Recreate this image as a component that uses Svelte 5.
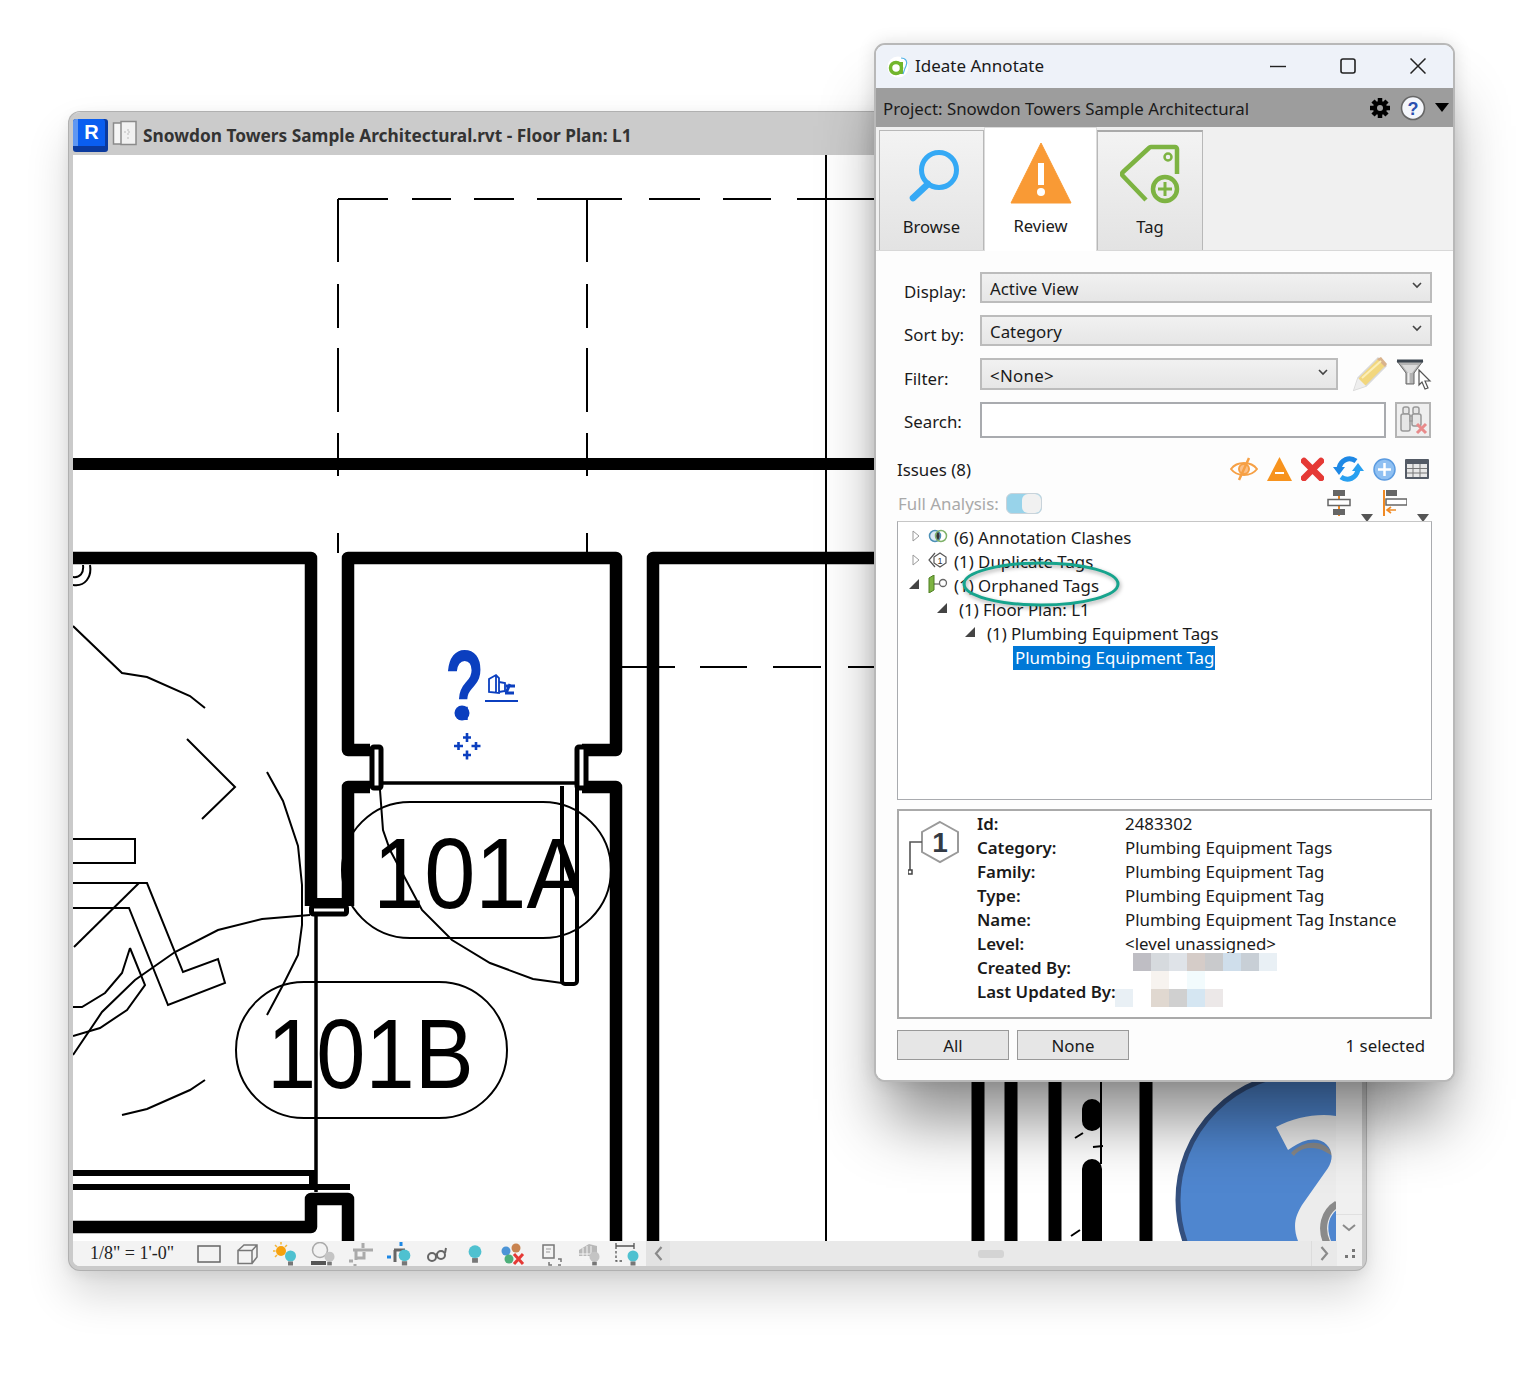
<script>
  const treeRows = [
    { text: "(6) Annotation Clashes", depth: 0, arrow: "closed", icon: "clash" },
    { text: "(1) Duplicate Tags", depth: 0, arrow: "closed", icon: "dup" },
    { text: "(1) Orphaned Tags", depth: 0, arrow: "open", icon: "orphan" },
    { text: "(1) Floor Plan: L1", depth: 1, arrow: "open" },
    { text: "(1) Plumbing Equipment Tags", depth: 2, arrow: "open" },
    { text: "Plumbing Equipment Tag", depth: 3, selected: true }
  ];

  const details = [
    ["Id:", "2483302"],
    ["Category:", "Plumbing Equipment Tags"],
    ["Family:", "Plumbing Equipment Tag"],
    ["Type:", "Plumbing Equipment Tag"],
    ["Name:", "Plumbing Equipment Tag Instance"],
    ["Level:", "<level unassigned>"],
    ["Created By:", ""],
    ["Last Updated By:", ""]
  ];

  // blurred names in the details box
  const mosaic = [
    "transparent", "#bfbec4", "#d6dade", "#dfe3e8", "#d5ccc8", "#c9cacc", "#cfdeeb", "#c8cfd6", "#e9f0f5",
    "transparent", "transparent", "#f7f3ef", "transparent", "#f2fbfd", "transparent", "transparent", "transparent", "transparent",
    "#e9f0f5", "transparent", "#e0d8d0", "#d0d0d0", "#d5e6f2", "#ece8e8", "transparent", "transparent", "transparent"
  ];
</script>

<div class="desk">
  <svg class="defs" width="0" height="0">
    <symbol id="bulb" viewBox="0 0 12 16">
      <circle cx="6" cy="6" r="5.5" />
      <rect x="3.5" y="11.5" width="5" height="4" fill="#777" />
    </symbol>
    <clipPath id="tag-clip"><rect x="340" y="800" width="239" height="140" /></clipPath>
  </svg>

  <!-- Revit window -->
  <section class="revit">
    <header class="revit-title">
      <div class="rlogo"><span>R</span></div>
      <svg width="26" height="27" viewBox="0 0 26 27">
        <rect x="1.5" y="3" width="15" height="21" fill="#f6f6f6" stroke="#8a8a8a" stroke-width="1.5" />
        <rect x="9" y="1.5" width="15" height="23" fill="#f1f1f1" stroke="#8a8a8a" stroke-width="1.5" />
        <path d="M12 12h8M16 9v10" stroke="#bbb" stroke-dasharray="2 2" />
      </svg>
      <h1>Snowdon Towers Sample Architectural.rvt - Floor Plan: L1</h1>
    </header>

    <div class="revit-body">
      <svg class="plan" viewBox="73 155 1263 1086" width="1263" height="1086">
        <g fill="none" stroke="#000">
          <!-- dashed overhead -->
          <path d="M338 199H388M412 199H451M474 199H514M537 199H622M649 199H700M723 199H771M797 199H875" stroke-width="2" />
          <path d="M338 199V262M338 284V328M338 348V412M338 433V476M338 533V553" stroke-width="2" />
          <path d="M587 199V262M587 284V328M587 348V412M587 433V476M587 533V553" stroke-width="2" />
          <path d="M622 667H675M700 667H747M773 667H821M848 667H875" stroke-width="2" />
          <path d="M826 155V1241" stroke-width="2" />
          <path d="M73 464H875" stroke-width="12" />

          <!-- tags -->
          <rect x="342" y="802" width="269" height="136" rx="68" stroke-width="2" />
          <rect x="236" y="982" width="271" height="136" rx="68" stroke-width="2" />

          <!-- furniture -->
          <g stroke-width="2">
            <path d="M73 626L122 673L147 677L190 696L205 708" />
            <path d="M187 739L235 787L202 819" />
            <path d="M267 772L283 801L298 846L302 885L302 925L298 955L283 985L267 1015" />
            <path d="M73 839H135V863H73" />
            <path d="M73 883H147L183 972L218 959L225 983L168 1005L129 908H73" />
            <path d="M139 883L74 947" />
            <path d="M130 948L145 985L127 1010L100 1028L73 1036" />
            <path d="M130 948L122 973L105 993L82 1007H73" />
            <path d="M310 915L262 919L218 930L175 952L135 980L102 1012L73 1055" />
            <path d="M122 1115L147 1109L190 1090L205 1080" />
            <path d="M380 790L383 830L390 850L422 910L452 940L490 963L533 979L562 983" />
            <path d="M73 585C85 587 92 577 90 565M73 577C80 578 84 573 83 565" />
          </g>
        </g>

        <g clip-path="url(#tag-clip)">
          <text class="room large" transform="translate(373 908) scale(1 1.08)">101A</text>
        </g>
        <text class="room" transform="translate(267 1088) scale(1 1.12)">101B</text>

        <g fill="none" stroke="#000">
          <!-- walls -->
          <g stroke-width="12.5" stroke-linejoin="round">
            <path d="M73 558H311V906" />
            <path d="M348 906V787H370M370 750H348V558H616V750H582M582 787H616V1241" />
            <path d="M653 1241V558H875" />
            <path d="M73 1227H311V1199H348V1241" />
          </g>
          <path d="M73 1173H312V1187M73 1187H350" stroke-width="6" />
          <path d="M311 902H348" stroke-width="8" />
          <rect x="311.500" y="906" width="35" height="8" rx="2" fill="#fff" stroke-width="5" />
          <rect x="372" y="747" width="9" height="41" rx="2" fill="#fff" stroke-width="5" />
          <rect x="577" y="747" width="9" height="41" rx="2" fill="#fff" stroke-width="5" />
          <path d="M381 783H577" stroke-width="3.500" />
          <path d="M562 786V981a3 3 0 0 0 3 3H574a3 3 0 0 0 3-3V786" stroke-width="4" />
          <path d="M316 914V1192" stroke-width="3.500" />

          <!-- right of the dialog -->
          <path d="M978 1081V1241M1011 1081V1241M1055 1081V1241M1146 1081V1241" stroke-width="13" />
          <path d="M1101 1081V1164" stroke-width="2" />
          <path d="M1075 1138L1083 1133M1093 1147L1103 1146M1071 1236L1080 1230" stroke-width="2" />
        </g>
        <rect x="1082" y="1099" width="20" height="32" rx="10" />
        <path d="M1082 1241V1169a10 10 0 0 1 20 0V1241Z" />

        <!-- orphaned tag -->
        <g fill="#0b3fbf" stroke="none">
          <text class="mark" transform="translate(445 720) scale(.64 1)">?</text>
          <circle cx="462" cy="713" r="7.500" />
          <path fill="none" stroke="#0b3fbf" stroke-width="2" d="M485 701H518" />
          <path fill="none" stroke="#0b3fbf" stroke-width="1.800" d="M489 679l7-4 3 3v15l-10-1zM496 675v17M499 682l6 1v8l-6 1" />
          <path fill="none" stroke="#0b3fbf" stroke-width="3" d="M506 686h9M505 693h9M510 684l-4 9" />
          <path fill="none" stroke="#0b3fbf" stroke-width="2.600" d="M467 733v9M463 737.500h8M467 750.500v9M463 755h8M454 746h9M458.500 742v8M471.500 746h9M476 742v8" />
        </g>

        <!-- help balloon behind the dialog -->
        <circle cx="1305" cy="1200" r="127" fill="#4f86cf" stroke="#34507f" stroke-width="5" />
        <path fill="#888" d="M1291 1153C1305 1138 1328 1140 1333 1156L1322 1150C1310 1146 1300 1148 1294 1156Z" />
        <path fill="#ececec" d="M1276 1127C1295 1117 1318 1113 1336 1116V1241H1298C1292 1225 1296 1215 1302 1205L1328 1168C1338 1152 1326 1136 1308 1140C1300 1142 1294 1146 1288 1150Z" />
        <path fill="none" stroke="#8a8a8a" stroke-width="7" d="M1337 1204C1324 1212 1320 1228 1327 1243" />
        <path fill="#4f86cf" d="M1338 1209C1328 1216 1326 1228 1331 1241H1338Z" />
      </svg>

      <aside class="vscroll">
        <div class="vdown">
          <svg width="14" height="8" viewBox="0 0 14 8"><path d="M1 1l6 5 6-5" fill="none" stroke="#8a8a8a" stroke-width="2" /></svg>
        </div>
      </aside>
    </div>

    <footer class="status">
      <div class="scale">1/8" = 1'-0"</div>
      <div class="view-icons">
        <svg viewBox="0 0 24 18"><rect x="1" y="1" width="22" height="16" fill="none" stroke="#666" stroke-width="1.500" /></svg>
        <svg viewBox="0 0 24 22"><path d="M3 7.500h14v13H3zM3 7.500L9 2h13v12l-5 6.500M17 7.500L22 2" fill="none" stroke="#777" stroke-width="1.500" /></svg>
        <svg viewBox="0 0 24 24">
          <circle cx="8" cy="9" r="5" fill="#f7a20e" />
          <path d="M8 0v2.500M0 9h2.500M2 3l2 2M14 3l-2 2M2 15l2-2" stroke="#f3b63a" stroke-width="1.500" />
          <use href="#bulb" x="11" y="8" width="13" height="16" fill="#4fc1d0" />
        </svg>
        <svg viewBox="0 0 24 24">
          <circle cx="9" cy="8" r="7.500" fill="#f2f2f2" stroke="#aaa" stroke-width="1.500" />
          <rect x="0" y="19" width="15" height="4" fill="#555" />
          <use href="#bulb" x="13" y="9" width="11" height="15" fill="#c4c4c4" />
        </svg>
        <svg viewBox="0 0 24 24"><path d="M14 1v5M4 8h20M7 8v10M7 16h8v-6" fill="none" stroke="#aaa" stroke-width="3" /><path d="M0 19h4M6 22v2" stroke="#aaa" stroke-width="3" /></svg>
        <svg viewBox="0 0 24 24">
          <path d="M7 8h11M8 8v12" fill="none" stroke="#666" stroke-width="3" />
          <path d="M14 0v4M0 15h4" stroke="#1e88e5" stroke-width="3" />
          <use href="#bulb" x="11" y="7" width="13" height="17" fill="#4fc1d0" />
        </svg>
        <svg viewBox="0 0 24 24"><circle cx="7" cy="15" r="4" fill="none" stroke="#666" stroke-width="2" /><circle cx="16" cy="13" r="4" fill="none" stroke="#666" stroke-width="2" /><path d="M10.500 13l2-1M20 11l1-5" stroke="#666" stroke-width="2" /></svg>
        <svg viewBox="0 0 24 24"><use href="#bulb" x="5" y="2" width="14" height="20" fill="#4fc1d0" /></svg>
        <svg viewBox="0 0 24 24">
          <circle cx="5" cy="9" r="4.500" fill="#4c94d6" />
          <circle cx="15" cy="6" r="4.500" fill="#c9834f" />
          <circle cx="8" cy="17" r="4.500" fill="#4caf7a" />
          <path d="M13 12l9 10M22 12l-9 10" stroke="#e53935" stroke-width="3" />
        </svg>
        <svg viewBox="0 0 24 24"><path d="M4 3h11v13H4z" fill="none" stroke="#777" stroke-width="1.500" /><path d="M7 7h5M7 10h4" stroke="#999" /><path d="M10 20v3h3M19 17h3v3M19 23h3" fill="none" stroke="#777" stroke-width="1.500" /></svg>
        <svg viewBox="0 0 24 24">
          <path d="M2 8l10-6 8 2v10H2z" fill="#b8b8b8" />
          <path d="M2 12h16M6 6v14M10 4v16M14 4v10M2 16h10M2 20h10" stroke="#f4f4f4" />
          <use href="#bulb" x="12" y="9" width="11" height="15" fill="#c4c4c4" />
        </svg>
        <svg viewBox="0 0 24 24" class="wide">
          <path d="M1 1v6M1 4h18M19 1v6" fill="none" stroke="#555" stroke-width="1.300" />
          <path d="M1 9v10h8" fill="none" stroke="#555" stroke-width="1.300" stroke-dasharray="2.500 2" />
          <use href="#bulb" x="12" y="8" width="12" height="16" fill="#4fc1d0" />
        </svg>
      </div>
      <div class="hscroll">
        <div class="harrow">
          <svg width="9" height="15" viewBox="0 0 9 15"><path d="M7.500 1L2 7.500l5.500 6.500" fill="none" stroke="#8a8a8a" stroke-width="2.200" /></svg>
        </div>
        <div class="htrack"><span class="hthumb"></span></div>
        <div class="harrow right">
          <svg width="9" height="15" viewBox="0 0 9 15"><path d="M1.500 1L7 7.500 1.500 14" fill="none" stroke="#8a8a8a" stroke-width="2.200" /></svg>
        </div>
      </div>
      <div class="grip">
        <svg width="12" height="12" viewBox="0 0 12 12" fill="#777"><rect x="8" y="1" width="3" height="3" /><rect x="8" y="7" width="3" height="3" /><rect x="1" y="7" width="3" height="3" /></svg>
      </div>
    </footer>
  </section>

  <!-- Ideate dialog -->
  <section class="dialog">
    <header class="dlg-title">
      <svg class="dlg-logo" width="22" height="22" viewBox="0 0 22 22">
        <circle cx="11" cy="11" r="10.500" fill="#fff" />
        <circle cx="9" cy="12" r="5.500" fill="none" stroke="#72b62c" stroke-width="3.500" />
        <path d="M14.500 6v12" stroke="#72b62c" stroke-width="3" />
        <path d="M14 2c5 0 7 4 5 8s-2 6-3 8" fill="none" stroke="#4fb2e6" stroke-width="1.200" />
      </svg>
      <span class="dlg-name">Ideate Annotate</span>
      <div class="win-btns">
        <svg width="16" height="16" viewBox="0 0 16 16"><path d="M0 8.500H16" stroke="#222" stroke-width="1.400" /></svg>
        <svg width="16" height="16" viewBox="0 0 16 16"><rect x="1" y="1" width="14" height="14" rx="2" fill="none" stroke="#222" stroke-width="1.600" /></svg>
        <svg width="16" height="16" viewBox="0 0 16 16"><path d="M.5.500l15 15M15.500.500l-15 15" stroke="#222" stroke-width="1.500" /></svg>
      </div>
    </header>

    <div class="project">
      <span class="project-name">Project: Snowdon Towers Sample Architectural</span>
      <div class="project-tools">
        <svg width="22" height="22" viewBox="0 0 22 22">
          <g stroke="#000" stroke-width="4.500"><path d="M11 1v20M1 11h20M4 4l14 14M18 4L4 18" /></g>
          <circle cx="11" cy="11" r="7" fill="#000" />
          <circle cx="11" cy="11" r="3" fill="#9d9d9d" />
        </svg>
        <svg width="26" height="26" viewBox="0 0 26 26">
          <circle cx="13" cy="13" r="11.500" fill="#f4f6fb" stroke="#666" stroke-width="1.600" />
          <text x="13" y="19.500" class="help-q">?</text>
        </svg>
        <svg width="14" height="9" viewBox="0 0 14 9"><path d="M0 0h14L7 9z" fill="#000" /></svg>
      </div>
    </div>

    <nav class="tabs">
      <div class="tab">
        <svg width="56" height="56" viewBox="0 0 56 56">
          <circle cx="35" cy="22" r="17.500" fill="none" stroke="#35a9f5" stroke-width="5" />
          <path d="M24 36L9 50" stroke="#35a9f5" stroke-width="6.500" stroke-linecap="round" />
        </svg>
        <span>Browse</span>
      </div>
      <div class="tab active">
        <svg width="62" height="62" viewBox="0 0 62 62">
          <path d="M31 1L61 61H1Z" fill="#f99a35" stroke="#f99a35" stroke-linejoin="round" />
          <rect x="28" y="21" width="6" height="22" fill="#fff" />
          <circle cx="31" cy="50" r="4" fill="#fff" />
        </svg>
        <span>Review</span>
      </div>
      <div class="tab">
        <svg width="60" height="60" viewBox="0 0 60 60" fill="none" stroke="#7db342" stroke-width="4.500" stroke-linejoin="round">
          <path d="M57 30V5a2 2 0 0 0-2-2H31a3 3 0 0 0-2 1L3 28a2.500 2.500 0 0 0 0 4L26 56" />
          <circle cx="48" cy="13" r="3.500" stroke-width="2.500" />
          <circle cx="45" cy="45" r="12" />
          <path d="M45 38V52M38 45H52" stroke-width="3" />
        </svg>
        <span>Tag</span>
      </div>
    </nav>

    <div class="panel">
      <div class="form">
        <div class="row">
          <label for="display">Display:</label>
          <div class="select grow" id="display"><span>Active View</span><svg class="chev" width="10" height="7" viewBox="0 0 10 7"><path d="M1 1l4 4 4-4" fill="none" stroke="#444" stroke-width="1.600" /></svg></div>
        </div>
        <div class="row">
          <label for="sort">Sort by:</label>
          <div class="select grow" id="sort"><span>Category</span><svg class="chev" width="10" height="7" viewBox="0 0 10 7"><path d="M1 1l4 4 4-4" fill="none" stroke="#444" stroke-width="1.600" /></svg></div>
        </div>
        <div class="row tall">
          <label for="filter">Filter:</label>
          <div class="select filter" id="filter"><span>&lt;None&gt;</span><svg class="chev" width="10" height="7" viewBox="0 0 10 7"><path d="M1 1l4 4 4-4" fill="none" stroke="#444" stroke-width="1.600" /></svg></div>
          <svg class="pencil" width="36" height="36" viewBox="0 0 36 36">
            <path d="M2 34L6 22 26 2l8 8L14 30Z" fill="#f2d77e" stroke="#d9d9d9" stroke-width="1.500" />
            <path d="M25 3l8 8 2-3-6-7z" fill="#d9b38c" />
            <path d="M2 34l4-12 8 8z" fill="#eee" />
            <path d="M10 22L29 5" stroke="#fbeeb8" stroke-width="2" />
          </svg>
          <svg class="funnel" width="36" height="32" viewBox="0 0 36 32">
            <path d="M1 3h26l-9 12v11l-8 0V15Z" fill="#b4b4b4" stroke="#666" stroke-width="1" />
            <path d="M1 3h26" stroke="#3d4650" stroke-width="3" />
            <path d="M6 7h16l-6 8H12Z" fill="#dcdcdc" />
            <path d="M12.500 15v10" stroke="#eee" stroke-width="2" />
            <path d="M23 12l11 11-5 0 3 7-3 1-3-7-3 3z" fill="#fff" stroke="#555" stroke-width="1.200" />
          </svg>
        </div>
        <div class="row search">
          <label for="search">Search:</label>
          <input id="search" type="text" />
          <button class="binoc" aria-label="Clear search">
            <svg width="30" height="30" viewBox="0 0 30 30">
              <g fill="#e6e6e6" stroke="#999" stroke-width="1.500">
                <rect x="5" y="2" width="6" height="7" rx="2" />
                <rect x="15" y="2" width="6" height="7" rx="2" />
                <rect x="3" y="9" width="9" height="17" rx="2" />
                <rect x="14" y="9" width="9" height="12" rx="2" />
                <path d="M12 11h2v5h-2z" />
              </g>
              <path d="M19 19l9 9M28 19l-9 9" stroke="#e88b8b" stroke-width="3" />
            </svg>
          </button>
        </div>
      </div>

      <div class="issues">
        <span>Issues (8)</span>
        <div class="tools">
          <svg width="28" height="24" viewBox="0 0 28 24" fill="none" stroke="#f6a045" stroke-width="2">
            <path d="M1 12C7 4 21 4 27 12 21 20 7 20 1 12Z" />
            <circle cx="14" cy="12" r="5" fill="#fbc089" />
            <path d="M19 1L9 23" stroke-width="2.500" />
          </svg>
          <svg width="25" height="24" viewBox="0 0 25 24"><path d="M12.500 0L25 24H0Z" fill="#f7931e" /><rect x="8" y="15" width="9" height="2" fill="#fff" /></svg>
          <svg width="23" height="24" viewBox="0 0 23 24"><path d="M3 4l17 17M20 4L3 21" stroke="#e53935" stroke-width="6.500" stroke-linecap="round" /></svg>
          <svg width="31" height="26" viewBox="0 0 31 26" fill="none">
            <path d="M23 5C16 0 8 4 6 12" stroke="#1e88e5" stroke-width="5" />
            <path d="M0 11h12l-6 8z" fill="#1e88e5" />
            <path d="M8 21c7 5 15 1 17-7" stroke="#29a0f0" stroke-width="5" />
            <path d="M31 15H19l6-8z" fill="#29a0f0" />
          </svg>
          <svg width="23" height="23" viewBox="0 0 23 23"><circle cx="11.500" cy="11.500" r="10.500" fill="#8fc0f2" stroke="#5b9be0" stroke-width="1.500" /><path d="M11.500 5v13M5 11.500h13" stroke="#fff" stroke-width="2.500" /></svg>
          <svg width="24" height="20" viewBox="0 0 24 20">
            <rect x="0" y="0" width="24" height="20" rx="1" fill="#545b66" />
            <rect x="2" y="5" width="20" height="13" fill="#e8e8e8" />
            <path d="M8 5v13M15 5v13M2 9.500h20M2 14h20" stroke="#777" />
          </svg>
        </div>
      </div>

      <div class="analysis">
        <span class="analysis-label">Full Analysis:</span>
        <span class="toggle"><i></i></span>
        <div class="tools second">
          <svg width="24" height="26" viewBox="0 0 24 26">
            <path d="M12 0v26" stroke="#f08a24" stroke-width="2" />
            <rect x="6" y="0" width="12" height="6" fill="#666" />
            <rect x="1" y="9.500" width="22" height="6" fill="#fff" stroke="#666" stroke-width="1.500" />
            <rect x="6" y="19" width="12" height="6" fill="#666" />
          </svg>
          <svg class="caret" width="12" height="8" viewBox="0 0 12 8"><path d="M0 0h12L6 8z" fill="#555" /></svg>
          <svg width="24" height="26" viewBox="0 0 24 26">
            <path d="M1 0v26" stroke="#f08a24" stroke-width="2" />
            <rect x="3" y="0" width="11" height="6" fill="#666" />
            <rect x="3" y="9" width="21" height="6" fill="#fff" stroke="#666" stroke-width="1.500" />
            <path d="M13 20H4M8 17l-4 3 4 3" fill="none" stroke="#f08a24" stroke-width="1.600" />
          </svg>
          <svg class="caret" width="12" height="8" viewBox="0 0 12 8"><path d="M0 0h12L6 8z" fill="#555" /></svg>
        </div>
      </div>

      <div class="tree">
        {#each treeRows as row}
          <div class="tree-row" style="padding-left:{row.depth * 28}px">
            <span class="arrow" class:open={row.arrow === "open"}>
              {#if row.arrow === "closed"}
                <svg width="8" height="12" viewBox="0 0 8 12"><path d="M1 1l6 5-6 5z" fill="#fff" stroke="#999" /></svg>
              {:else if row.arrow === "open"}
                <svg width="10" height="10" viewBox="0 0 10 10"><path d="M10 0v10H0z" fill="#444" /></svg>
              {/if}
            </span>
            {#if row.icon === "clash"}
              <svg class="node-icon" width="20" height="14" viewBox="0 0 20 14">
                <circle cx="7" cy="7" r="5.500" fill="#dbe9f5" stroke="#4b8fb5" stroke-width="1.500" />
                <circle cx="13" cy="7" r="5.500" fill="none" stroke="#7fb26a" stroke-width="1.500" />
                <path d="M10 3a5.500 5.500 0 0 1 0 8 5.500 5.500 0 0 1 0-8" fill="#333" />
              </svg>
            {:else if row.icon === "dup"}
              <svg class="node-icon" width="20" height="16" viewBox="0 0 20 16" fill="none" stroke="#555" stroke-width="1.200">
                <path d="M7 1L1 8l6 7" />
                <path d="M12 1l6 4v6l-6 4-6-4V5Z" />
                <text x="12" y="11.500" class="dup-num">1</text>
              </svg>
            {:else if row.icon === "orphan"}
              <svg class="node-icon" width="20" height="18" viewBox="0 0 20 18">
                <path d="M1 3l5-3v15l-5 3z" fill="#7db342" stroke="#4e7f22" />
                <path d="M6 9h6" stroke="#444" />
                <circle cx="15" cy="8" r="3.500" fill="#fff" stroke="#666" stroke-width="1.300" />
              </svg>
            {/if}
            <span class="node-text" class:selected={row.selected}>{row.text}</span>
          </div>
        {/each}
        <svg class="callout" width="170" height="60" viewBox="0 0 170 60">
          <ellipse cx="83" cy="27" rx="77" ry="21" fill="none" stroke="#17a48d" stroke-width="3" />
        </svg>
      </div>

      <div class="info">
        <svg class="info-icon" width="56" height="60" viewBox="0 0 56 60">
          <path d="M32 2L50 12V32L32 42 14 32V12Z" fill="#fff" stroke="#9a9a9a" stroke-width="2" />
          <path d="M14 22H2V50" fill="none" stroke="#555" stroke-width="1.600" />
          <rect x="0" y="50" width="4" height="4" fill="#fff" stroke="#444" stroke-width="1.500" />
          <text x="32" y="32" class="hex-num">1</text>
        </svg>
        <dl>
          {#each details as [label, value]}
            <dt>{label}</dt>
            <dd>{value}</dd>
          {/each}
        </dl>
        <div class="mosaic">
          {#each mosaic as colour}
            <i style="background:{colour}"></i>
          {/each}
        </div>
      </div>

      <div class="actions">
        <button>All</button>
        <button>None</button>
        <span class="count">1 selected</span>
      </div>
    </div>
  </section>
</div>

<style>
  :global(body) {
    background: #fff;
    font-family: "Noto Sans", "Open Sans", sans-serif;
  }
  .desk {
    position: relative;
    width: 1528px;
    height: 1389px;
    overflow: hidden;
    color: #1a1a1a;
    font-size: 16.85px;
  }
  .defs {
    position: absolute;
  }

  .revit {
    position: absolute;
    left: 69px;
    top: 112px;
    width: 1297px;
    height: 1158px;
    box-sizing: border-box;
    border: 4px solid #cacaca;
    border-top-width: 0;
    border-radius: 11px;
    background: #fff;
    display: flex;
    flex-direction: column;
    box-shadow: 0 0 0 1px #b0b0b0, 0 24px 44px rgba(0, 0, 0, 0.16), 0 4px 14px rgba(0, 0, 0, 0.08);
  }
  .revit-title {
    height: 43px;
    flex: none;
    box-sizing: border-box;
    padding-top: 4px;
    background: #cbcbcb;
    display: flex;
    align-items: center;
    gap: 4px;
    border-radius: 8px 8px 0 0;
  }
  .revit-title svg {
    margin-top: -4px;
  }
  .revit-title h1 {
    margin: 0 0 0 1px;
    font-size: 17.3px;
    font-weight: 700;
    color: #333;
  }
  .rlogo {
    width: 35px;
    height: 33px;
    background: #0b3a9e;
    border-radius: 3px;
    position: relative;
  }
  .rlogo span {
    position: absolute;
    left: 0;
    top: 0;
    width: 32px;
    height: 27px;
    box-sizing: border-box;
    background: #0a5ef0;
    border-left: 5px solid #5f97f2;
    border-radius: 3px 3px 0 0;
    color: #fff;
    font: 700 20px/27px "Liberation Sans", sans-serif;
    text-align: center;
  }
  .revit-body {
    flex: 1;
    display: flex;
    min-height: 0;
  }
  .plan {
    display: block;
    flex: none;
  }
  .room {
    font-family: "Liberation Sans", sans-serif;
    font-size: 88.500px;
  }
  .room.large {
    font-size: 92px;
  }
  .mark {
    font-family: "Liberation Sans", sans-serif;
    font-size: 100px;
    font-weight: 700;
  }
  .vscroll {
    flex: 1;
    background: #f0f0f0;
    display: flex;
    flex-direction: column;
    justify-content: flex-end;
  }
  .vdown {
    height: 26px;
    border-top: 1px solid #e0e0e0;
    display: flex;
    align-items: center;
    justify-content: center;
  }

  .status {
    height: 25px;
    flex: none;
    display: flex;
    background: #f3f3f3;
    align-items: stretch;
    border-radius: 0 0 7px 7px;
  }
  .scale {
    width: 107px;
    padding-left: 17px;
    font: 18px/25px "Liberation Serif", serif;
    color: #222;
    white-space: nowrap;
  }
  .view-icons {
    width: 449px;
    display: flex;
    align-items: center;
    gap: 14px;
  }
  .view-icons svg {
    width: 24px;
    height: 24px;
    flex: none;
  }
  .hscroll {
    flex: 1;
    display: flex;
    background: #e9e9e9;
  }
  .harrow {
    width: 24px;
    background: #e2e2e2;
    display: flex;
    align-items: center;
    justify-content: center;
  }
  .harrow.right {
    width: 25px;
    background: #e9e9e9;
    border-left: 1px solid #dcdcdc;
  }
  .htrack {
    flex: 1;
    display: flex;
    align-items: center;
  }
  .hthumb {
    width: 26px;
    height: 8px;
    margin-left: 308px;
    background: #d4d4d4;
    border-radius: 3px;
  }
  .grip {
    width: 25px;
    display: flex;
    align-items: center;
    justify-content: center;
    background: #f0f0f0;
  }

  .dialog {
    position: absolute;
    left: 874px;
    top: 43px;
    width: 581px;
    height: 1039px;
    box-sizing: border-box;
    border: 2px solid #b8b8b8;
    border-radius: 11px;
    background: #fff;
    display: flex;
    flex-direction: column;
    box-shadow: 0 50px 60px -12px rgba(0, 0, 0, 0.45), 0 0 18px rgba(0, 0, 0, 0.12);
  }
  .dlg-title {
    height: 43px;
    flex: none;
    display: flex;
    align-items: center;
    background: #eef2f9;
    border-radius: 9px 9px 0 0;
  }
  .dlg-logo {
    margin-left: 11px;
  }
  .dlg-name {
    margin: -2px 0 0 6px;
    flex: 1;
    font-size: 17px;
  }
  .win-btns {
    display: flex;
    gap: 54px;
    margin: -2px 27px 0 0;
  }
  .project {
    height: 39px;
    flex: none;
    display: flex;
    align-items: center;
    justify-content: space-between;
    background: #9d9d9d;
    padding: 0 4px 0 7px;
  }
  .project-name {
    margin-top: 2px;
  }
  .project-tools {
    display: flex;
    align-items: center;
    gap: 9px;
  }
  .help-q {
    font: 700 18px "Liberation Sans", sans-serif;
    fill: #2a4fb0;
    text-anchor: middle;
  }
  .tabs {
    height: 124px;
    flex: none;
    box-sizing: border-box;
    background: #f0f0f0;
    border-bottom: 1px solid #d8d8d8;
    display: flex;
    align-items: flex-end;
    padding-left: 3px;
  }
  .tab {
    width: 106px;
    height: 120px;
    box-sizing: border-box;
    border: 1px solid #b8b8b8;
    border-bottom: 0;
    background: linear-gradient(#f3f3f3, #e3e3e3);
    display: flex;
    flex-direction: column;
    align-items: center;
    justify-content: flex-end;
    padding-bottom: 12px;
    gap: 11px;
    font-size: 16.600px;
  }
  .tab:first-child {
    width: 105px;
  }
  .tab.active {
    width: 113px;
    height: 124px;
    margin-bottom: -1px;
    background: #fff;
    border-color: #dcdcdc;
    padding-bottom: 14px;
    gap: 10px;
  }
  .tab:last-child {
    border-top: 2px solid #aaa;
  }
  .panel {
    flex: 1;
    min-height: 0;
    padding: 21px 21px 0;
    background: #fdfdfd;
    border-radius: 0 0 9px 9px;
  }
  .form {
    display: flex;
    flex-direction: column;
    gap: 12px;
  }
  .row {
    display: flex;
    align-items: center;
    height: 31px;
  }
  .row.tall {
    height: 32px;
  }
  .row.search {
    height: 36px;
  }
  .row label {
    width: 76px;
    padding-left: 7px;
    flex: none;
    margin-top: 7px;
  }
  .row.tall label {
    margin-top: 9px;
  }
  .row.search label {
    margin-top: 2px;
  }
  .select {
    height: 100%;
    box-sizing: border-box;
    border: 2px solid #bcbcbc;
    background: linear-gradient(#f1f1f1, #e6e6e6);
    padding: 0 8px;
    display: flex;
    align-items: center;
    justify-content: space-between;
  }
  .select span {
    margin-top: 2px;
  }
  .grow {
    flex: 1;
  }
  .filter {
    width: 358px;
    flex: none;
  }
  .filter span {
    letter-spacing: 0.3px;
  }
  .chev {
    margin: -4px 0 0;
  }
  .pencil {
    margin-left: 14px;
    flex: none;
  }
  .funnel {
    margin-left: 8px;
    flex: none;
  }
  input {
    width: 406px;
    height: 36px;
    box-sizing: border-box;
    border: 2px solid #a9abaf;
    background: #fff;
    margin: 0;
    flex: none;
  }
  .binoc {
    width: 36px;
    height: 36px;
    margin-left: 9px;
    padding: 0;
    box-sizing: border-box;
    border: 2px solid #b4b4b4;
    background: #efefef;
    display: flex;
    align-items: center;
    justify-content: center;
  }
  .issues {
    margin-top: 17px;
    height: 28px;
    display: flex;
    align-items: center;
    justify-content: space-between;
  }
  .tools {
    display: flex;
    align-items: center;
    gap: 9px;
    margin-right: 3px;
  }
  .analysis {
    margin-top: 6px;
    height: 28px;
    display: flex;
    align-items: center;
    padding-left: 1px;
  }
  .analysis-label {
    color: #a9a9a9;
  }
  .toggle {
    width: 36px;
    height: 21px;
    margin-left: 7px;
    box-sizing: border-box;
    border: 1px solid #c9d3da;
    border-radius: 6px;
    background: #98d3ea;
    display: flex;
    justify-content: flex-end;
  }
  .toggle i {
    width: 19px;
    background: #f1f1f1;
    border-radius: 6px;
  }
  .tools.second {
    margin-left: auto;
    gap: 10px;
    margin-right: 3px;
  }
  .caret {
    align-self: flex-end;
    margin-bottom: -6px;
  }
  .tree {
    position: relative;
    margin-top: 4px;
    height: 279px;
    box-sizing: border-box;
    border: 1px solid #a9abaf;
    border-top-color: #c6c6c6;
    background: #fff;
    padding: 4px 0 0 9px;
  }
  .tree-row {
    display: flex;
    align-items: center;
    height: 24px;
  }
  .arrow {
    width: 22px;
    flex: none;
    display: flex;
    justify-content: flex-start;
    margin-top: -4px;
    padding-left: 5px;
    box-sizing: border-box;
  }
  .arrow.open {
    padding-left: 2px;
  }
  .node-icon {
    margin: -4px 4px 0 -1px;
    flex: none;
  }
  .dup-num {
    font: 9px "Liberation Sans", sans-serif;
    text-anchor: middle;
    stroke: none;
    fill: #333;
  }
  .node-text {
    padding: 0 2px;
    white-space: nowrap;
    line-height: 24px;
  }
  .node-text.selected {
    background: #0078d7;
    color: #fff;
    padding-right: 0;
    width: 200px;
    overflow: hidden;
  }
  .callout {
    position: absolute;
    left: 60px;
    top: 35px;
    filter: drop-shadow(1px 2px 2px rgba(0, 0, 0, 0.35));
  }
  .info {
    position: relative;
    margin-top: 9px;
    height: 210px;
    box-sizing: border-box;
    border: 2px solid #aaa;
    background: #fff;
    display: flex;
  }
  .info-icon {
    margin: 9px 0 0 9px;
    flex: none;
  }
  .hex-num {
    font: 700 28px "Liberation Sans", sans-serif;
    fill: #333a44;
    text-anchor: middle;
  }
  dl {
    margin: 1px 0 0 13px;
    display: grid;
    grid-template-columns: 148px 1fr;
    grid-auto-rows: 24px;
    line-height: 24px;
  }
  dt {
    font-weight: 600;
  }
  dd {
    margin: 0;
  }
  .mosaic {
    position: absolute;
    left: 216px;
    top: 142px;
    display: grid;
    grid-template-columns: repeat(9, 18px);
    grid-auto-rows: 18px;
  }
  .actions {
    margin-top: 11px;
    height: 30px;
    display: flex;
    align-items: center;
    gap: 8px;
  }
  .actions button {
    width: 112px;
    height: 30px;
    padding: 0;
    box-sizing: border-box;
    border: 1px solid #999;
    background: #e6e6e6;
    color: #1a1a1a;
    font: inherit;
  }
  .count {
    margin-left: auto;
    margin-right: 7px;
  }
</style>
